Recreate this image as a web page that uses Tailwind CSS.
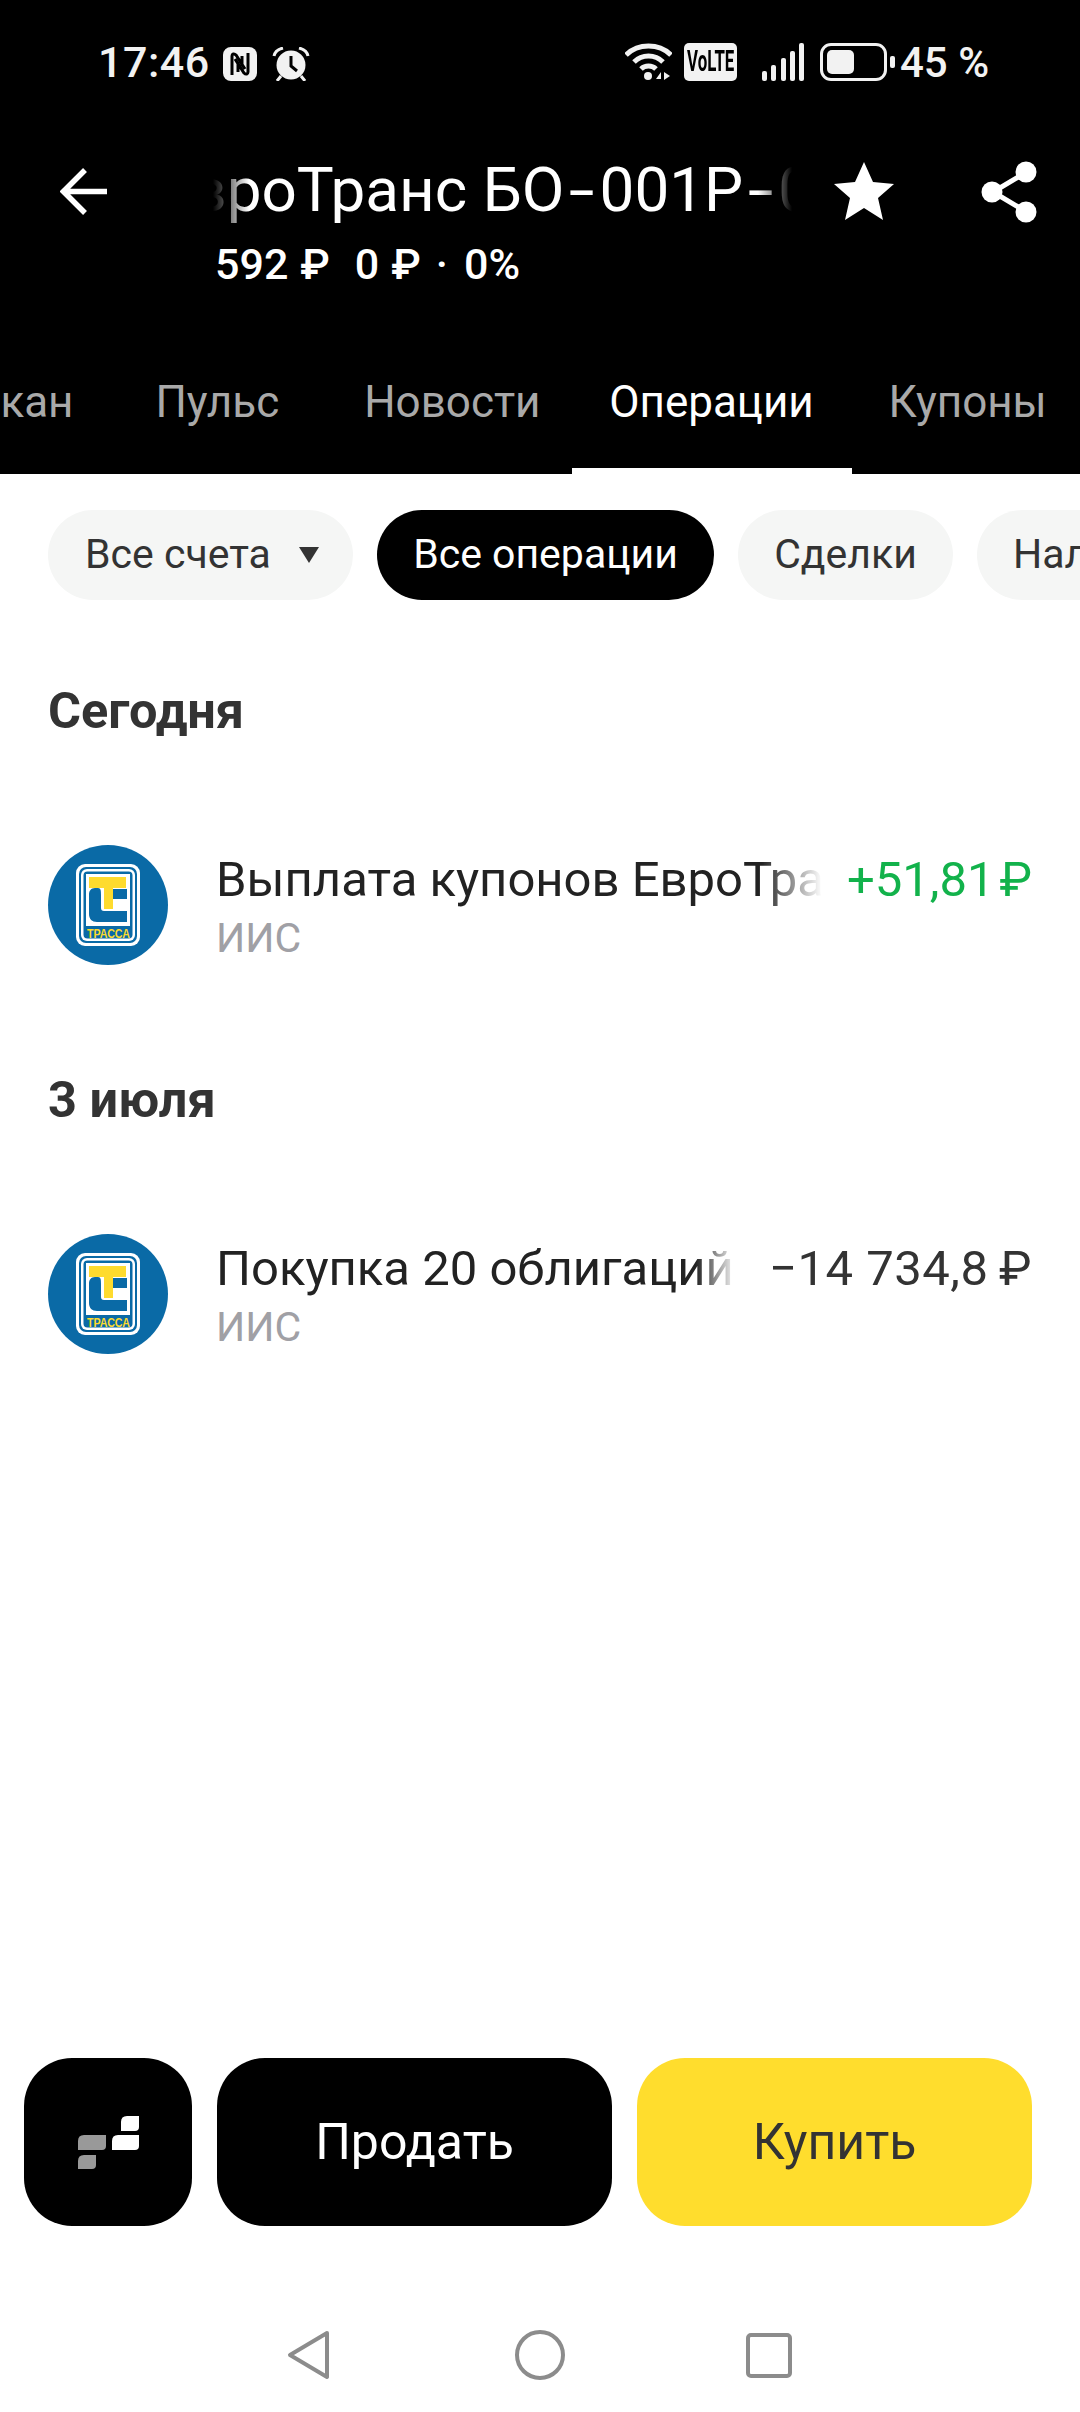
<!DOCTYPE html>
<html lang="ru">
<head>
  <meta charset="UTF-8" />
  <meta name="viewport" content="width=device-width, initial-scale=1.0"/>
  <title>Операции</title>
  <script src="https://cdn.jsdelivr.net/npm/@tailwindcss/browser@4"></script>
</head>
<body class="bg-white font-['Roboto',sans-serif]">
<div class="w-[1080px] h-[2412px] flex flex-col overflow-hidden">

  <!-- Header -->
  <header class="bg-black h-[474px] shrink-0 flex flex-col text-white">
    <!-- Status bar -->
    <div class="h-[162px] pt-[43px] pl-[98px] flex items-start">
      <span class="h-[38px] flex items-center text-[43px] font-medium text-[#f2f2f2] tracking-[0.5px] w-[125px]">17:46</span>
      <svg class="mt-[4px]" width="34" height="34" viewBox="0 0 34 34">
        <rect width="34" height="34" rx="8" fill="#f2f2f2"/>
        <path d="M9 28V9c0-2 2-3 4-1l9 14M15 25V15M25 6v19c0 2-2 3-4 1l-9-14M19 9v10" fill="none" stroke="#000" stroke-width="3"/>
      </svg>
      <svg class="ml-[15px] mt-[4px]" width="38" height="34" viewBox="0 0 38 34">
        <circle cx="19" cy="18" r="14.500" fill="#f2f2f2"/>
        <path d="M19 9v10l6 5" fill="none" stroke="#000" stroke-width="3"/>
        <path d="M2 9C3 4 7 2 11 1M36 9c-1-5-5-7-9-8M9 29l-4 5M29 29l4 5" fill="none" stroke="#f2f2f2" stroke-width="3"/>
      </svg>
      <svg class="ml-[315px]" width="47" height="38" viewBox="0 0 47 38">
        <path d="M1 12C13 0 34 0 46 12M9 19c8-8 21-8 29 0M16 26c4-4 11-4 15 0" fill="none" stroke="#f2f2f2" stroke-width="5"/>
        <circle cx="23" cy="33" r="4" fill="#f2f2f2"/>
        <path d="M31 36l5-7v7zM39 29l6 4-6 4z" fill="#f2f2f2"/>
      </svg>
      <span class="ml-[12px] w-[53px] h-[38px] rounded-[5px] bg-[#f2f2f2] text-black flex items-center justify-center overflow-hidden">
        <span class="text-[29px] font-bold scale-x-[0.58] whitespace-nowrap">VoLTE</span>
      </span>
      <div class="ml-[25px] w-[42px] h-[38px] flex items-end justify-between">
        <span class="w-[5px] h-[10px] rounded-[2px] bg-[#f2f2f2]"></span>
        <span class="w-[5px] h-[16px] rounded-[2px] bg-[#f2f2f2]"></span>
        <span class="w-[5px] h-[23px] rounded-[2px] bg-[#f2f2f2]"></span>
        <span class="w-[5px] h-[30px] rounded-[2px] bg-[#f2f2f2]"></span>
        <span class="w-[5px] h-[38px] rounded-[2px] bg-[#f2f2f2]"></span>
      </div>
      <div class="ml-[16px] w-[67px] h-[38px] rounded-[11px] border-[3px] border-[#f2f2f2] p-[4px]">
        <div class="w-[27px] h-full rounded-[5px] bg-[#f2f2f2]"></div>
      </div>
      <span class="ml-[3px] mt-[13px] w-[5px] h-[12px] rounded-[2px] bg-[#f2f2f2]"></span>
      <span class="ml-[5px] h-[38px] flex items-center text-[42px] font-medium text-[#f2f2f2] whitespace-nowrap">45 %</span>
    </div>

    <!-- Title row -->
    <div class="h-[130px] pl-[60px] flex items-start">
      <svg class="mt-[6px]" width="49" height="47" viewBox="0 0 49 47">
        <path d="M47 23.5H5M25 2L3.500 23.500 25 45" fill="none" stroke="#fff" stroke-width="5.500"/>
      </svg>
      <div class="ml-[104px] w-[579px] shrink-0">
        <div class="-mt-[6px] overflow-hidden [mask-image:linear-gradient(90deg,transparent_0,#000_36px,#000_545px,transparent_579px)]">
          <div class="-ml-[57px] text-[62px] leading-[68px] whitespace-nowrap">ЕвроТранс БО<span class="inline-block scale-x-150 mx-[9px]">-</span>001Р<span class="inline-block scale-x-150 mx-[9px]">-</span>05</div>
        </div>
        <div class="mt-[18px] pl-[2px] text-[43px] leading-[44px] font-medium whitespace-nowrap flex">
          <span>592</span><span class="ml-[12px]">₽</span><span class="ml-[25px]">0</span><span class="ml-[12px]">₽</span><span class="ml-[15px]">·</span><span class="ml-[16px]">0%</span>
        </div>
      </div>
      <svg class="ml-[41px] -mt-[1px]" width="62" height="60" viewBox="0 0 62 60">
        <path d="M31 1l9 20 21 2-16 14 5 22-19-12-19 12 5-22L1 23l21-2z" fill="#fff"/>
      </svg>
      <svg class="ml-[86px] -mt-[1px]" width="56" height="62" viewBox="0 0 56 62">
        <path d="M44 12L12 31l32 19" fill="none" stroke="#fff" stroke-width="5"/>
        <circle cx="45" cy="11" r="10.500" fill="#fff"/>
        <circle cx="11" cy="31" r="10.500" fill="#fff"/>
        <circle cx="45" cy="51" r="10.500" fill="#fff"/>
      </svg>
    </div>

    <!-- Tabs -->
    <nav class="flex-1 flex text-[44px] text-[#a9a9a9] whitespace-nowrap -ml-[73px]">
      <a class="pt-[77px]">Стакан</a>
      <a class="pt-[77px] ml-[82px]">Пульс</a>
      <a class="pt-[77px] ml-[85px]">Новости</a>
      <a class="ml-[31px] w-[280px] shrink-0 text-center pt-[77px] text-white border-b-[6px] border-white">Операции</a>
      <a class="pt-[77px] ml-[37px]">Купоны</a>
    </nav>
  </header>

  <!-- Filter chips -->
  <div class="mt-[36px] pl-[48px] flex gap-[24px] text-[41px] h-[90px] text-[#333333] whitespace-nowrap shrink-0">
    <button class="w-[305px] shrink-0 rounded-full bg-[#f5f6f5] flex items-center pl-[37px]">Все счета
      <svg class="ml-[27px]" width="22" height="18" viewBox="0 0 22 18"><path d="M1 1h20l-10 16z" fill="#333333"/></svg>
    </button>
    <button class="w-[337px] shrink-0 rounded-full bg-black text-white flex items-center justify-center">Все операции</button>
    <button class="w-[215px] shrink-0 rounded-full bg-[#f5f6f5] flex items-center justify-center">Сделки</button>
    <button class="w-[200px] shrink-0 rounded-full bg-[#f5f6f5] flex items-center pl-[36px]">Налоги</button>
  </div>

  <!-- Operations -->
  <main class="px-[48px] flex-1 flex flex-col text-[#333333]">
    <h2 class="mt-[84px] text-[50.5px] leading-[54px] font-bold">Сегодня</h2>

    <div class="mt-[107px] h-[120px] flex">
      <svg class="shrink-0" width="120" height="120" viewBox="0 0 120 120">
        <circle cx="60" cy="60" r="60" fill="#0a6aa6"/>
        <rect x="28" y="19" width="64" height="82" rx="9" fill="#fff"/>
        <rect x="31" y="22" width="58" height="76" rx="7" fill="#0a6aa6"/>
        <rect x="33" y="24" width="54" height="72" rx="6" fill="#fff"/>
        <rect x="35.500" y="26.500" width="49" height="67" rx="4" fill="#0a6aa6"/>
        <rect x="38" y="29" width="44" height="52" fill="#fff"/>
        <path d="M50 43h-3c-4 0-6 3-6 6v20c0 5 3 8 8 8h30V66H56c-2 0-3-1-3-3V50c0-4 0-7-3-7zM65 44h14v10H65z" fill="#0a6aa6"/>
        <path d="M41 32h37v11H65v21h-9V43H41z" fill="#fedb2e"/>
        <text x="39" y="93" textLength="43" lengthAdjust="spacingAndGlyphs" font-size="12.500" font-weight="700" fill="#fedb2e" font-family="Liberation Sans, sans-serif">ТРАССА</text>
      </svg>
      <div class="ml-[48px] flex-1 min-w-0 flex flex-col">
        <div class="mt-[8px] flex text-[49px] leading-[54px] whitespace-nowrap">
          <span class="flex-1 min-w-0 overflow-hidden text-[#222222] [mask-image:linear-gradient(90deg,#000_calc(100%-60px),transparent)]">Выплата купонов ЕвроТранс</span>
          <span class="ml-[25px] shrink-0 text-[#12b24b]">+51,81&#8202;₽</span>
        </div>
        <div class="mt-[9px] text-[41px] leading-[44px] text-[#a0a0a5]">ИИС</div>
      </div>
    </div>

    <h2 class="mt-[108px] text-[50.5px] leading-[54px] font-bold">3 июля</h2>

    <div class="mt-[107px] h-[120px] flex">
      <svg class="shrink-0" width="120" height="120" viewBox="0 0 120 120">
        <circle cx="60" cy="60" r="60" fill="#0a6aa6"/>
        <rect x="28" y="19" width="64" height="82" rx="9" fill="#fff"/>
        <rect x="31" y="22" width="58" height="76" rx="7" fill="#0a6aa6"/>
        <rect x="33" y="24" width="54" height="72" rx="6" fill="#fff"/>
        <rect x="35.500" y="26.500" width="49" height="67" rx="4" fill="#0a6aa6"/>
        <rect x="38" y="29" width="44" height="52" fill="#fff"/>
        <path d="M50 43h-3c-4 0-6 3-6 6v20c0 5 3 8 8 8h30V66H56c-2 0-3-1-3-3V50c0-4 0-7-3-7zM65 44h14v10H65z" fill="#0a6aa6"/>
        <path d="M41 32h37v11H65v21h-9V43H41z" fill="#fedb2e"/>
        <text x="39" y="93" textLength="43" lengthAdjust="spacingAndGlyphs" font-size="12.500" font-weight="700" fill="#fedb2e" font-family="Liberation Sans, sans-serif">ТРАССА</text>
      </svg>
      <div class="ml-[48px] flex-1 min-w-0 flex flex-col">
        <div class="mt-[8px] flex text-[49px] leading-[54px] whitespace-nowrap">
          <span class="flex-1 min-w-0 overflow-hidden text-[#222222] [mask-image:linear-gradient(90deg,#000_calc(100%-40px),transparent)]">Покупка 20 облигаций ЕвроТранс</span>
          <span class="ml-[33px] shrink-0 tracking-[0.5px]">−14 734,8&#8201;₽</span>
        </div>
        <div class="mt-[9px] text-[41px] leading-[44px] text-[#a0a0a5]">ИИС</div>
      </div>
    </div>
  </main>

  <!-- Actions -->
  <div class="pl-[24px] flex gap-[25px] text-[50px] h-[168px] shrink-0">
    <button class="w-[168px] rounded-[48px] bg-black flex items-center justify-center">
      <svg width="61" height="53" viewBox="0 0 61 53">
        <path d="M49 0h12v11q0 4-4 4H43V6q0-6 6-6zM40 19h21v11q0 4-4 4H34V25q0-6 6-6z" fill="#fff"/>
        <path d="M6 19h22v11q0 4-4 4H0V25q0-6 6-6zM6 39h12v10q0 4-4 4H0V45q0-6 6-6z" fill="#999999"/>
      </svg>
    </button>
    <button class="w-[395px] rounded-[48px] bg-black text-white">Продать</button>
    <button class="w-[395px] rounded-[48px] bg-[#ffdd2d] text-[#333333]">Купить</button>
  </div>

  <!-- Android nav -->
  <div class="h-[186px] shrink-0 pt-[104px] pl-[286px] flex items-start">
    <svg width="44" height="50" viewBox="0 0 44 50"><path d="M41 3L4 25l37 22z" fill="none" stroke="#8c8c8c" stroke-width="4" stroke-linejoin="round"/></svg>
    <svg class="ml-[184px]" width="52" height="50" viewBox="0 0 52 50"><circle cx="26" cy="25" r="23" fill="none" stroke="#8c8c8c" stroke-width="4"/></svg>
    <svg class="ml-[180px] mt-[3px]" width="46" height="45" viewBox="0 0 46 45"><rect x="2" y="2" width="42" height="41" rx="3" fill="none" stroke="#8c8c8c" stroke-width="4"/></svg>
  </div>
</div>
</body>
</html>
